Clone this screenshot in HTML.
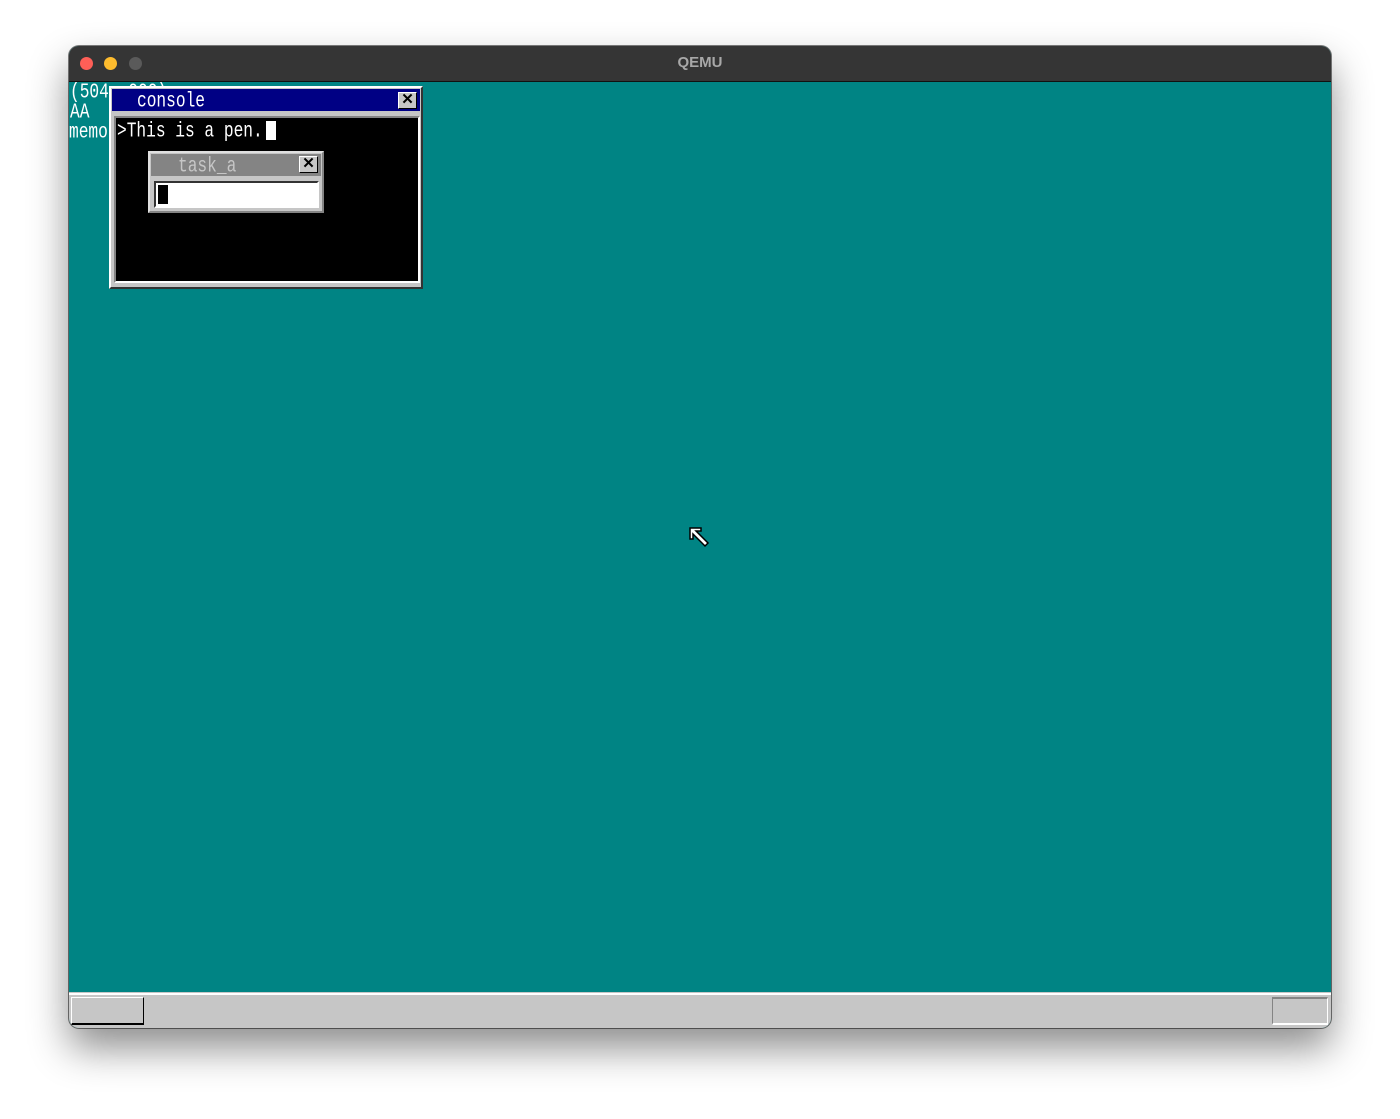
<!DOCTYPE html>
<html><head><style>
*{margin:0;padding:0;box-sizing:border-box}
body{width:1400px;height:1119px;background:#fff;position:relative;overflow:hidden;font-family:"Liberation Serif",serif}
.win{position:absolute;left:69px;top:46px;width:1262px;height:982px;border-radius:10px;overflow:hidden;box-shadow:0 20px 40px rgba(0,0,0,.45),0 0 0 1px rgba(0,0,0,.5);background:#008484}
.tb{position:absolute;left:0;top:0;width:100%;height:36px;background:#353535;border-bottom:1px solid #111;color:#a8a8a8;font:bold 15px "Liberation Sans",sans-serif;text-align:center;line-height:34px}
.dot{position:absolute;top:11px;width:13px;height:13px;border-radius:50%}
.a{position:absolute}
.t{position:absolute;color:#fff;font-family:"Liberation Mono",monospace;font-size:16.2px;line-height:16px;white-space:pre;transform:scaleY(1.3);transform-origin:top left}
</style></head><body>
<div class="win">
<div class="tb">QEMU
<div class="dot" style="left:11px;background:#fe5f57"></div>
<div class="dot" style="left:35px;background:#febc2e"></div>
<div class="dot" style="left:60px;background:#5a5a5a"></div>
</div>
<div class="t" style="left:1px;top:36px">(504, 000)</div>
<div class="t" style="left:1px;top:56px">AA</div>
<div class="t" style="left:0px;top:76px">memo</div>
<!-- console -->
<div class="a" style="left:40px;top:40px;width:314px;height:203px;background:#c6c6c6;border-top:2px solid #fff;border-left:2px solid #fff;border-right:2px solid #333;border-bottom:2px solid #333"></div>
<div class="a" style="left:43px;top:43px;width:308px;height:22px;background:#000084"></div>
<div class="t" style="left:68px;top:45px">console</div>
<div class="a" style="left:329px;top:46px;width:19px;height:17px;background:#c6c6c6;border-top:1px solid #fff;border-left:1px solid #fff;border-right:1px solid #000;border-bottom:1px solid #000;font:bold 15px 'Liberation Sans',sans-serif;text-align:center;line-height:14px">✕</div>
<div class="a" style="left:45px;top:70px;width:306px;height:167px;background:#000;border:2px solid #fff;border-top-color:#848484;border-left-color:#848484"></div>
<div class="t" style="left:48px;top:75px">&gt;This is a pen.</div>
<div class="a" style="left:197px;top:75px;width:10px;height:19px;background:#fff"></div>
<!-- task_a -->
<div class="a" style="left:79px;top:105px;width:176px;height:62px;background:#c6c6c6;border-top:2px solid #e0e0e0;border-left:2px solid #e0e0e0;border-right:2px solid #848484;border-bottom:2px solid #848484"></div>
<div class="a" style="left:82px;top:108px;width:170px;height:22px;background:#848484"></div>
<div class="t" style="left:109px;top:110px;color:#c6c6c6">task_a</div>
<div class="a" style="left:230px;top:110px;width:19px;height:17px;background:#c6c6c6;border-top:1px solid #fff;border-left:1px solid #fff;border-right:1px solid #000;border-bottom:1px solid #000;font:bold 15px 'Liberation Sans',sans-serif;text-align:center;line-height:14px">✕</div>
<div class="a" style="left:85px;top:135px;width:165px;height:27px;background:#fff;border:2px solid #fff;border-top-color:#333;border-left-color:#333"></div>
<div class="a" style="left:89px;top:139px;width:10px;height:19px;background:#000"></div>
<!-- cursor -->
<svg class="a" style="left:620px;top:481px" width="22" height="22" viewBox="0 0 22 22"><path d="M1 1H12V4H7L19 16L16 19L4 7V12H1Z" fill="#fff" stroke="#000" stroke-width="1.5"/></svg>
<!-- taskbar -->
<div class="a" style="left:0;top:946px;width:1262px;height:36px;background:#c6c6c6;border-top:1px solid #c6c6c6"></div>
<div class="a" style="left:0;top:947px;width:1262px;height:2px;background:#fff"></div>
<div class="a" style="left:2px;top:951px;width:73px;height:28px;border-top:1px solid #fff;border-left:1px solid #fff;border-right:1px solid #000;border-bottom:2px solid #000"></div>
<div class="a" style="left:1203px;top:951px;width:56px;height:28px;border-top:2px solid #848484;border-left:1px solid #848484;border-right:1px solid #fff;border-bottom:2px solid #fff"></div>
</div>
</body></html>
